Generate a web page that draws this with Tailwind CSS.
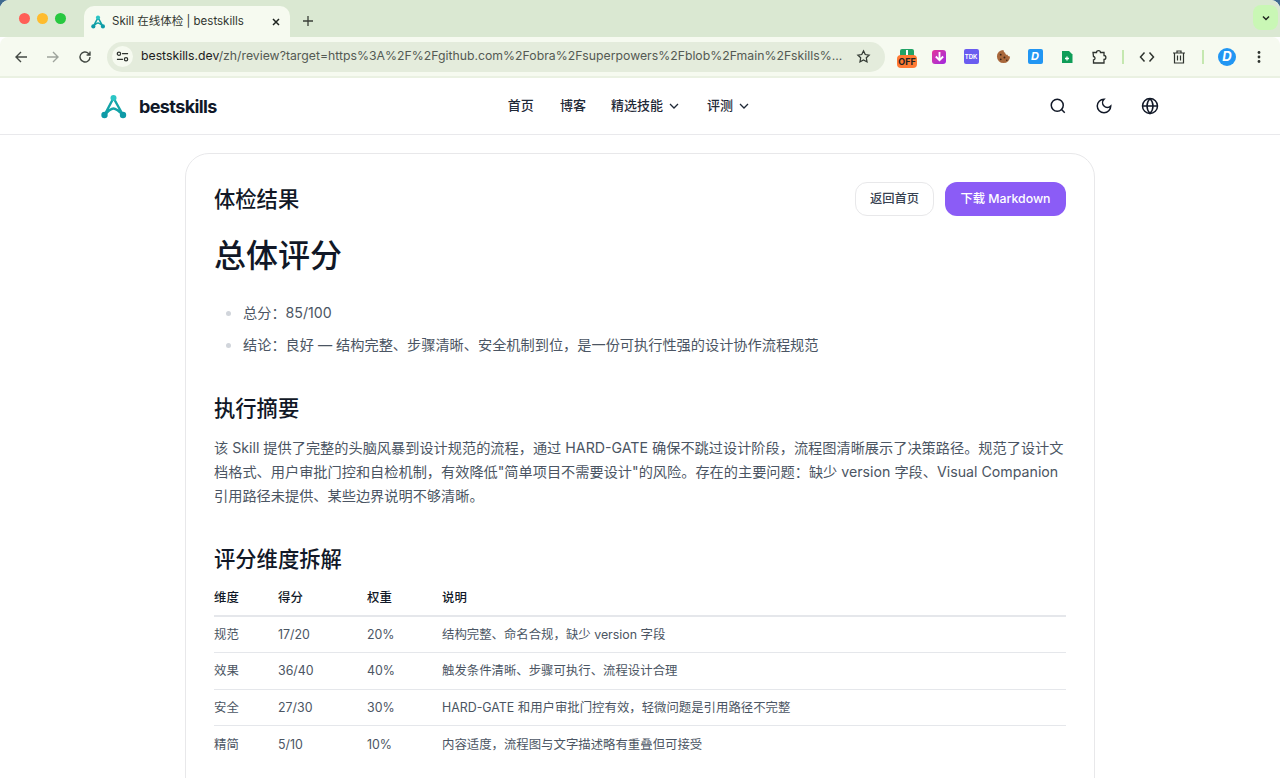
<!doctype html>
<html lang="zh">
<head>
<meta charset="utf-8">
<title>Skill 在线体检 | bestskills</title>
<script src="https://cdn.jsdelivr.net/npm/@tailwindcss/browser@4"></script>
</head>
<body class="h-[778px] overflow-hidden bg-[#3f6a90] font-['Inter','Noto_Sans_CJK_SC',sans-serif] text-[#111827]">
<div class="h-full overflow-hidden rounded-t-[9px] bg-white">
<!-- Tab strip -->
<div class="relative flex h-[37px] items-end bg-[#dae8d2] pl-[84px]">
  <div class="absolute left-[19px] top-[13px] flex gap-[7px]">
    <span class="size-[11px] rounded-full bg-[#ff5f57]"></span>
    <span class="size-[11px] rounded-full bg-[#febc2e]"></span>
    <span class="size-[11px] rounded-full bg-[#28c840]"></span>
  </div>
  <div class="flex h-[31px] w-[206px] items-center rounded-t-[10px] bg-[#f6faf0] pl-[7px] pr-[9px]">
    <svg class="size-[14px] shrink-0" viewBox="0 0 27 27" fill="none"><path d="M13.500 5 4.500 22M13.500 5 23 22M4.500 22c3.500-4 6-6.500 9-6.500s5.500 2.500 9.500 6.500" stroke="#13a3a8" stroke-width="3"/><circle cx="13.500" cy="5" r="4" fill="#2cc5c5"/><circle cx="4.500" cy="22" r="4" fill="#0e9aa7"/><circle cx="23" cy="22" r="4" fill="#0e9aa7"/></svg>
    <span class="ml-[7px] flex-1 whitespace-nowrap text-[11.500px] text-[#30352f]">Skill 在线体检 | bestskills</span>
    <svg class="size-[10px]" viewBox="0 0 10 10" fill="none" stroke="#1f2420" stroke-width="1.500"><path d="m2 2 6 6M8 2 2 8"/></svg>
  </div>
  <svg class="mb-[11px] ml-[13px] size-[10px]" viewBox="0 0 10 10" fill="none" stroke="#3a3f38" stroke-width="1.300"><path d="M5 0v10M0 5h10"/></svg>
  <div class="mb-[7px] ml-auto mr-[2px] flex size-[25px] items-center justify-center rounded-[8px] bg-[#c9f7b5]">
    <svg class="size-[10px]" viewBox="0 0 10 10" fill="none" stroke="#1f2420" stroke-width="1.500"><path d="m2 3.500 3 3 3-3"/></svg>
  </div>
</div>
<!-- Toolbar -->
<div class="flex h-[41px] items-center rounded-t-[8px] border-b-2 border-[#eaf1e2] bg-[#f6faf0] pl-[14px]">
  <svg class="size-[14px]" viewBox="0 0 14 14" fill="none" stroke="#444a44" stroke-width="1.400"><path d="M13 7H2M7 2 2 7l5 5"/></svg>
  <svg class="ml-[18px] size-[14px]" viewBox="0 0 14 14" fill="none" stroke="#9ea49c" stroke-width="1.400"><path d="M1 7h11M7 2l5 5-5 5"/></svg>
  <svg class="ml-[18px] size-[14px]" viewBox="0 0 14 14" fill="none" stroke="#444a44" stroke-width="1.400"><path d="M12 7a5 5 0 1 1-1.500-3.600L12 5M12 1.500V5H8.600"/></svg>
  <div class="ml-[15px] flex h-[30px] w-[778px] items-center rounded-full bg-[#e4ecdc] pl-[5px] pr-[14px]">
    <span class="flex size-[21px] shrink-0 items-center justify-center rounded-full bg-[#f6faf0]">
      <svg class="size-[13px]" viewBox="0 0 14 14" fill="none" stroke="#2f342f" stroke-width="1.300"><circle cx="3.200" cy="4" r="1.800"/><path d="M6.500 4H13M1 10h6.500"/><circle cx="10.800" cy="10" r="1.800"/></svg>
    </span>
    <span class="ml-[8px] flex-1 whitespace-nowrap text-[12.250px] text-[#545a53]"><span class="text-[#1c201c]">bestskills.dev</span>/zh/review?target=https%3A%2F%2Fgithub.com%2Fobra%2Fsuperpowers%2Fblob%2Fmain%2Fskills%...</span>
    <svg class="size-[15px] shrink-0" viewBox="0 0 24 24" fill="none" stroke="#333a33" stroke-width="2"><path d="m12 3 2.800 5.800 6.200.9-4.500 4.400 1.100 6.300L12 17.400l-5.600 3 1.100-6.300L3 9.700l6.200-.9z"/></svg>
  </div>
  <div class="ml-[6px] flex items-center">
    <div class="flex w-[32px] justify-center">
      <div class="relative mt-[4px] h-[20px] w-[20px]">
        <span class="absolute left-[3px] top-0 flex h-[7px] w-[14px] justify-center rounded-t-[2px] bg-[#21a366]"><span class="mt-[1px] h-[5px] w-[2px] bg-white"></span></span>
        <span class="absolute left-0 top-[6px] flex h-[13px] w-[20px] items-center justify-center rounded-[4px] bg-[#ff7a33] text-[9px] font-bold leading-none text-[#222]">OFF</span>
      </div>
    </div>
    <div class="flex w-[32px] justify-center">
      <span class="flex size-[14px] items-center justify-center rounded-[3px] bg-gradient-to-br from-[#e5309a] to-[#a020e0]">
        <svg class="size-[11px]" viewBox="0 0 12 12" fill="none" stroke="#fff" stroke-width="2"><path d="M6 1v9M2 6l4 4 4-4"/></svg>
      </span>
    </div>
    <div class="flex w-[32px] justify-center">
      <span class="flex size-[15px] items-center justify-center rounded-[2px] bg-[#6a5cf0] text-[6px] font-bold leading-none text-white">TDK</span>
    </div>
    <div class="flex w-[32px] justify-center">
      <svg class="size-[15px]" viewBox="0 0 16 16"><path d="M8 1a7 7 0 1 0 7 7c-1.500.3-2.500-.6-2.600-1.800C11 6.500 9.800 5.500 9.800 4 8.800 3.800 8 2.500 8 1z" fill="#a9683c"/><circle cx="5" cy="6" r="1" fill="#3a2416"/><circle cx="9" cy="9" r="1" fill="#3a2416"/><circle cx="5" cy="11" r="1" fill="#3a2416"/><circle cx="11.500" cy="12" r=".8" fill="#3a2416"/></svg>
    </div>
    <div class="flex w-[32px] justify-center">
      <span class="flex size-[15px] items-center justify-center rounded-[2px] bg-[#2196f3] text-[11px] font-bold italic leading-none text-white">D</span>
    </div>
    <div class="flex w-[32px] justify-center">
      <svg class="size-[14px]" viewBox="0 0 14 14"><path d="M2 1h7l3.500 3.500V13H2z" fill="#0f9d58"/><path d="M7 6.500v4M5 8.500h4" stroke="#fff" stroke-width="1.300" fill="none"/></svg>
    </div>
    <div class="flex w-[32px] justify-center">
      <svg class="size-[16px]" viewBox="0 0 16 16" fill="none" stroke="#2e332e" stroke-width="1.300"><path d="M2 3.500h3.500c0-2.500 4-2.500 4 0H13v3c2.500 0 2.500 4 0 4v3.500H2.500V11c2 0 2-3.500 0-3.500z"/></svg>
    </div>
    <div class="flex w-[16px] justify-center"><span class="h-[14px] w-[1.500px] bg-[#c5e8b0]"></span></div>
    <div class="flex w-[32px] justify-center">
      <svg class="size-[16px]" viewBox="0 0 16 16" fill="none" stroke="#2e332e" stroke-width="1.500"><path d="M5.500 3.500 1.500 8l4 4.500M10.500 3.500l4 4.500-4 4.500"/></svg>
    </div>
    <div class="flex w-[32px] justify-center">
      <svg class="size-[14px]" viewBox="0 0 14 14" fill="none" stroke="#2e332e" stroke-width="1.200"><path d="M1 3h12M5 3V1h4v2M2.500 3v10h9V3M5.500 5.500v5M8.500 5.500v5"/></svg>
    </div>
    <div class="flex w-[16px] justify-center"><span class="h-[14px] w-[1.500px] bg-[#c5e8b0]"></span></div>
    <div class="flex w-[32px] justify-center">
      <span class="flex size-[18px] items-center justify-center rounded-full bg-[#2196f3] text-[13px] font-bold italic leading-none text-white">D</span>
    </div>
    <div class="flex w-[32px] justify-center">
      <svg class="size-[14px]" viewBox="0 0 14 14" fill="#2e332e"><circle cx="7" cy="2.500" r="1.400"/><circle cx="7" cy="7" r="1.400"/><circle cx="7" cy="11.500" r="1.400"/></svg>
    </div>
  </div>
</div>
<!-- Site header -->
<header class="flex h-[57px] items-center border-b border-[#e9e9ec] pl-[100px] pr-[121px]">
  <svg class="size-[27px] shrink-0" viewBox="0 0 27 27" fill="none"><path d="M13.500 5 4.500 22M13.500 5 23 22M4.500 22c3.500-4 6-6.500 9-6.500s5.500 2.500 9.500 6.500" stroke="#13a3a8" stroke-width="2.400"/><circle cx="13.500" cy="5" r="3" fill="#2cc5c5"/><circle cx="4.500" cy="22" r="3.200" fill="#0e9aa7"/><circle cx="23" cy="22" r="3.200" fill="#0e9aa7"/></svg>
  <span class="ml-[12px] text-[18px] font-bold tracking-[-0.6px] text-[#101828]">bestskills</span>
  <nav class="ml-[291px] flex items-center text-[13px] font-medium text-[#1f2937]">
    <span>首页</span>
    <span class="ml-[26px]">博客</span>
    <span class="ml-[25px]">精选技能</span>
    <svg class="ml-[5px] size-[12px]" viewBox="0 0 12 12" fill="none" stroke="#1f2937" stroke-width="1.300"><path d="m2 4 4 4 4-4"/></svg>
    <span class="ml-[27px]">评测</span>
    <svg class="ml-[5px] size-[12px]" viewBox="0 0 12 12" fill="none" stroke="#1f2937" stroke-width="1.300"><path d="m2 4 4 4 4-4"/></svg>
  </nav>
  <div class="ml-auto flex items-center gap-[28px]">
    <svg class="size-[18px]" viewBox="0 0 24 24" fill="none" stroke="#111827" stroke-width="2"><circle cx="11" cy="11" r="8"/><path d="m21 21-4.300-4.300"/></svg>
    <svg class="size-[18px]" viewBox="0 0 24 24" fill="none" stroke="#111827" stroke-width="2"><path d="M12 3a6 6 0 0 0 9 9 9 9 0 1 1-9-9z"/></svg>
    <svg class="size-[18px]" viewBox="0 0 24 24" fill="none" stroke="#111827" stroke-width="2"><circle cx="12" cy="12" r="10"/><path d="M12 2a14.500 14.500 0 0 0 0 20 14.500 14.500 0 0 0 0-20M2 12h20"/></svg>
  </div>
</header>
<!-- Card -->
<main class="mx-[185px] mt-[18px] h-[700px] rounded-[24px] border border-[#e8e8ea] px-[28px] pt-[28px]">
  <div class="flex items-center justify-between">
    <h2 class="pt-[1px] text-[21.300px] font-medium text-[#111827]">体检结果</h2>
    <div class="flex gap-[11px] text-[12.300px] font-medium">
      <span class="flex h-[34px] w-[79px] items-center justify-center rounded-[12px] border border-[#e8e8ea] pt-[1px] text-[#374151]">返回首页</span>
      <span class="flex h-[34px] w-[121px] items-center justify-center rounded-[12px] bg-[#8b5cf6] pt-[1px] text-white">下载 Markdown</span>
    </div>
  </div>
  <h1 class="mt-[16px] text-[32px] font-medium leading-[48px] text-[#111827]">总体评分</h1>
  <ul class="mt-[21px] text-[14.200px] leading-[24px] text-[#4b5563]">
    <li class="flex items-center"><span class="ml-[12px] size-[5px] rounded-full bg-[#d1d5db]"></span><span class="ml-[12px]">总分：85/100</span></li>
    <li class="mt-[8px] flex items-center"><span class="ml-[12px] size-[5px] rounded-full bg-[#d1d5db]"></span><span class="ml-[12px]">结论：良好 — 结构完整、步骤清晰、安全机制到位，是一份可执行性强的设计协作流程规范</span></li>
  </ul>
  <h3 class="mt-[35px] text-[21.300px] font-medium leading-[32px] text-[#111827]">执行摘要</h3>
  <p class="mt-[12px] text-[14.200px] leading-[24px] text-[#4b5563]">该 Skill 提供了完整的头脑风暴到设计规范的流程，通过 HARD-GATE 确保不跳过设计阶段，流程图清晰展示了决策路径。规范了设计文档格式、用户审批门控和自检机制，有效降低"简单项目不需要设计"的风险。存在的主要问题：缺少 version 字段、Visual Companion 引用路径未提供、某些边界说明不够清晰。</p>
  <h3 class="mt-[35px] text-[21.300px] font-medium leading-[32px] text-[#111827]">评分维度拆解</h3>
  <table class="mt-[7px] w-full border-collapse text-left text-[12.400px]">
    <thead>
      <tr class="h-[34px] border-b-2 border-[#e5e7eb] text-[#111827]">
        <th class="w-[64px] font-medium">维度</th><th class="w-[89px] font-medium">得分</th><th class="w-[75px] font-medium">权重</th><th class="font-medium">说明</th>
      </tr>
    </thead>
    <tbody class="text-[#4b5563]">
      <tr class="h-[36.500px] border-b border-[#e5e7eb]"><td class="pt-[2px]">规范</td><td class="pt-[2px]">17/20</td><td class="pt-[2px]">20%</td><td class="pt-[2px]">结构完整、命名合规，缺少 version 字段</td></tr>
      <tr class="h-[36.500px] border-b border-[#e5e7eb]"><td class="pt-[2px]">效果</td><td class="pt-[2px]">36/40</td><td class="pt-[2px]">40%</td><td class="pt-[2px]">触发条件清晰、步骤可执行、流程设计合理</td></tr>
      <tr class="h-[36.500px] border-b border-[#e5e7eb]"><td class="pt-[2px]">安全</td><td class="pt-[2px]">27/30</td><td class="pt-[2px]">30%</td><td class="pt-[2px]">HARD-GATE 和用户审批门控有效，轻微问题是引用路径不完整</td></tr>
      <tr class="h-[36.500px]"><td class="pt-[2px]">精简</td><td class="pt-[2px]">5/10</td><td class="pt-[2px]">10%</td><td class="pt-[2px]">内容适度，流程图与文字描述略有重叠但可接受</td></tr>
    </tbody>
  </table>
</main>
</div>
</body>
</html>
